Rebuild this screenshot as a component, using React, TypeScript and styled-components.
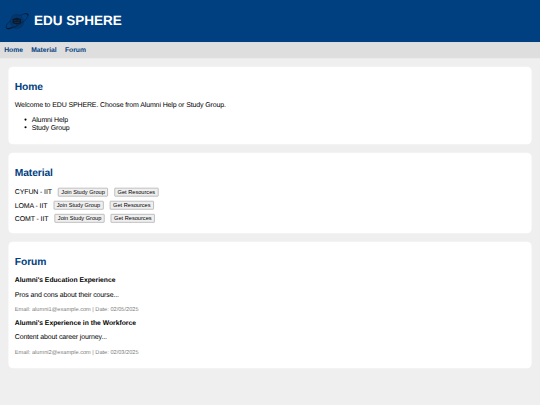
import React from "react";
import styled, { createGlobalStyle } from "styled-components";

interface IGroup {
  id: number;
  name: string;
}

interface IPost {
  id: number;
  title: string;
  body: string;
  email: string;
  date: string;
}

const links = ["Home", "Material", "Forum"];

const groups: IGroup[] = [
  { id: 1, name: "CYFUN - IIT" },
  { id: 2, name: "LOMA - IIT" },
  { id: 3, name: "COMT - IIT" },
];

const posts: IPost[] = [
  {
    id: 1,
    title: "Alumni's Education Experience",
    body: "Pros and cons about their course...",
    email: "alumni1@example.com",
    date: "02/05/2025",
  },
  {
    id: 2,
    title: "Alumni's Experience in the Workforce",
    body: "Content about career journey...",
    email: "alumni2@example.com",
    date: "02/03/2025",
  },
];

function App() {
  return (
    <Viewport>
      <GlobalStyle />
      <Page>
        <Header>
          <Logo viewBox="0 0 60 60" aria-hidden="true">
            <circle cx="30" cy="31" r="17" fill="#02366d" />
            <path
              d="M17 19C23 13 36 13 42 19M15 28C14 39 21 47 30 48C39 47 45 42 46 34"
              fill="none"
              stroke="#07305c"
              strokeWidth="1.6"
            />
            <path
              d="M38 17C48 11 56 11 56 16C56 25 43 34 29 42C17 48 6 50 5 45C4 40 8 35 14 30"
              fill="none"
              stroke="#0a213d"
              strokeWidth="1.8"
            />
            <path d="M4 43C6 49 15 46 23 43C15 50 5 53 4 43Z" fill="#08182b" />
            <path d="M48 12C55 10 59 13 57 18C55 14 53 13 48 12Z" fill="#08182b" />
            <path d="M20 25L30 22L40 25V35L30 38L20 35Z" fill="#071a30" />
            <path
              d="M23 29H29M32 29H37M24 33H36"
              stroke="#25405f"
              strokeWidth="1.2"
            />
          </Logo>
          <Title>EDU SPHERE</Title>
        </Header>
        <Nav>
          {links.map((link) => (
            <NavLink key={link} href={`#${link.toLowerCase()}`}>
              {link}
            </NavLink>
          ))}
        </Nav>
        <Main>
          <Card id="home">
            <Heading>Home</Heading>
            <Text>
              Welcome to EDU SPHERE. Choose from Alumni Help or Study Group.
            </Text>
            <List>
              <li>Alumni Help</li>
              <li>Study Group</li>
            </List>
          </Card>
          <Card id="material">
            <Heading>Material</Heading>
            {groups.map((group) => (
              <Group key={group.id}>
                {group.name}
                <Button>Join Study Group</Button>
                <Button>Get Resources</Button>
              </Group>
            ))}
          </Card>
          <Card id="forum">
            <Heading>Forum</Heading>
            {posts.map((post) => (
              <Post key={post.id}>
                <PostTitle>{post.title}</PostTitle>
                <Text>{post.body}</Text>
                <Meta>
                  Email: {post.email} | Date: {post.date}
                </Meta>
              </Post>
            ))}
          </Card>
        </Main>
      </Page>
    </Viewport>
  );
}

export default App;

const GlobalStyle = createGlobalStyle`
  * {
    box-sizing: border-box;
  }
  body {
    margin: 0;
    background-color: #efefef;
  }
`;

const Viewport = styled.div`
  width: 100%;
  height: 100vh;
  overflow: hidden;
`;

// The 1280px desktop layout, scaled down to a 540px window
const Page = styled.div`
  width: 1280px;
  height: 960px;
  transform: scale(0.421875);
  transform-origin: 0 0;
  color: #000;
  font-family: Arial, "Liberation Sans", sans-serif;
  font-size: 16.6px;
  letter-spacing: -0.018em;
  line-height: 18px;
  text-rendering: geometricPrecision;
`;

const Header = styled.header`
  display: flex;
  align-items: center;
  height: 100px;
  padding: 0 10px;
  background-color: #004080;
`;

const Logo = styled.svg`
  width: 60px;
  height: 60px;
  margin-right: 10.5px;
`;

const Title = styled.h1`
  margin: -3px 0 0;
  color: #fff;
  font-size: 32px;
  letter-spacing: 0;
  line-height: 37px;
`;

const Nav = styled.nav`
  display: flex;
  align-items: center;
  gap: 19.5px;
  height: 38px;
  padding: 0 10px;
  background-color: #dedede;
`;

const NavLink = styled.a`
  color: #004080;
  font-size: 16px;
  font-weight: bold;
  letter-spacing: 0;
  text-decoration: none;
`;

const Main = styled.main`
  display: flex;
  flex-direction: column;
  gap: 20px;
  padding: 20px;
`;

const Card = styled.section`
  padding: 35px 15px 15px;
  background-color: #fff;
  border-radius: 10px;
`;

const Heading = styled.h2`
  margin: 0 0 20px;
  color: #004080;
  font-size: 24.4px;
  letter-spacing: -0.01em;
  line-height: 28px;
`;

const Text = styled.p`
  margin: -1px 0 17px;
`;

const List = styled.ul`
  margin: 0 0 16px;
  padding-left: 40px;
`;

const Group = styled.div`
  display: flex;
  align-items: center;
  gap: 14.4px;
  height: 21px;
  margin-bottom: 10px;
`;

const Button = styled.button`
  height: 21px;
  padding: 0 6px;
  border: 2px solid #b4b4b4;
  border-radius: 2px;
  background-color: #efefef;
  color: #000;
  font-family: inherit;
  font-size: 13.33px;
  letter-spacing: 0;
  line-height: 15px;
  white-space: nowrap;
`;

const Post = styled.article`
  margin-bottom: 15px;
`;

const PostTitle = styled.h3`
  margin: 0 0 16px;
  font-size: 16px;
  letter-spacing: 0;
`;

const Meta = styled.p`
  margin: 0;
  color: #808080;
  font-size: 13.33px;
  letter-spacing: 0;
`;
